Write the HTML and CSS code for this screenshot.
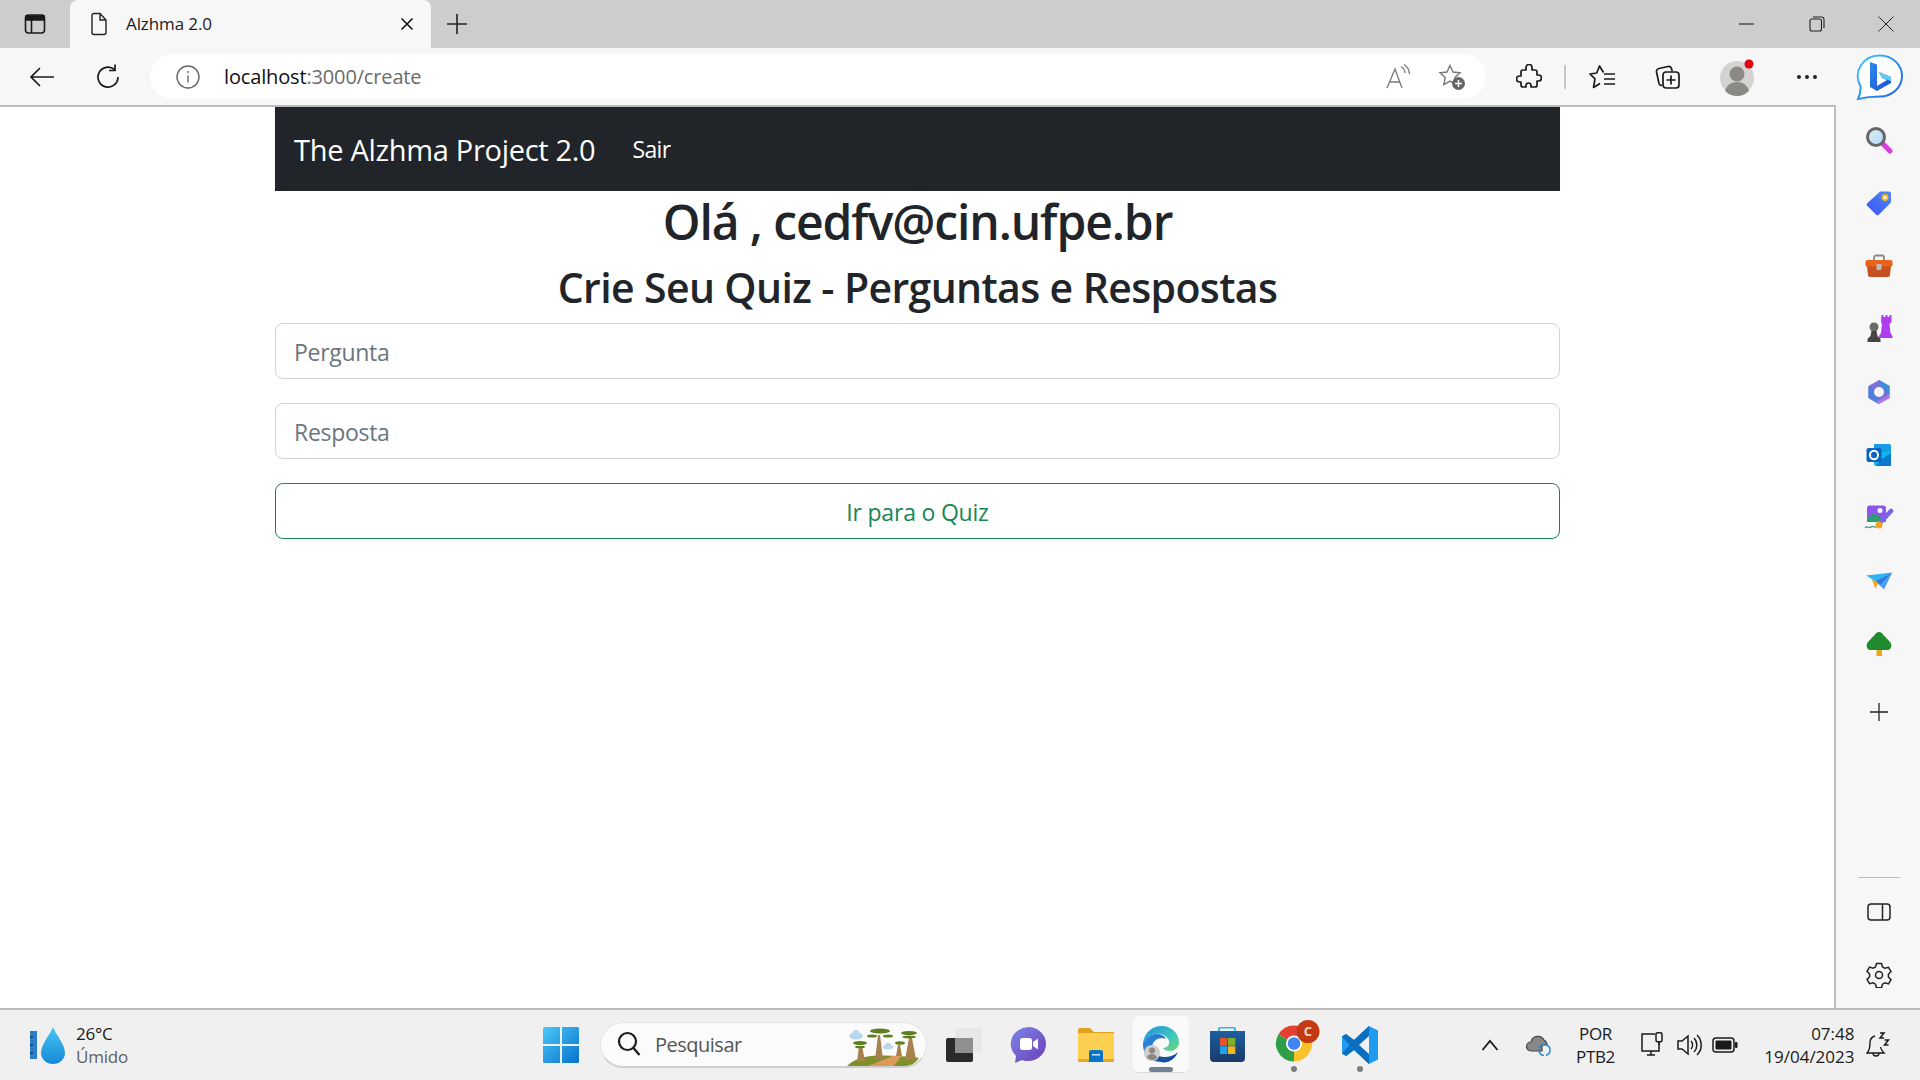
FILE: index.html
```html
<!DOCTYPE html>
<html lang="pt-BR">
<head>
    <meta charset="UTF-8">
    <title>Alzhma 2.0</title>
    <link rel="stylesheet" href="styles.css">
</head>
<body>
    <div class="tabstrip">
        <div class="strip-btn">
            <svg width="24" height="24" viewBox="0 0 24 24" fill="none" stroke="#1a1a1a" stroke-width="1.6"><rect x="2.5" y="3" width="19" height="18" rx="3"/><path d="M3 4h18v4H3z" fill="#1a1a1a"/><path d="M8.5 8v13"/></svg>
        </div>
        <div class="tab">
            <svg class="tab-doc" width="18" height="24" viewBox="0 0 18 24" fill="none" stroke="#222" stroke-width="1.4"><path d="M2 3.5a2 2 0 0 1 2-2h6l6 6.5v12.500a2 2 0 0 1-2 2H4a2 2 0 0 1-2-2z"/><path d="M10 1.500V8h6"/></svg>
            <span class="tab-title">Alzhma 2.0</span>
            <svg class="tab-close" width="14" height="14" viewBox="0 0 14 14" stroke="#111" stroke-width="1.6"><path d="M1.500 1.500l11 11M12.500 1.500l-11 11"/></svg>
        </div>
        <div class="new-tab">
            <svg width="22" height="22" viewBox="0 0 22 22" stroke="#222" stroke-width="1.6"><path d="M11 1v20M1 11h20"/></svg>
        </div>
        <div class="win-controls">
            <svg width="16" height="16" viewBox="0 0 16 16" stroke="#222" stroke-width="1.1"><path d="M0 8h15"/></svg>
            <svg width="16" height="16" viewBox="0 0 16 16" fill="none" stroke="#222" stroke-width="1.1"><rect x="1" y="3" width="11.500" height="12" rx="2"/><path d="M4 1h8.500A2.500 2.500 0 0 1 15 3.500V12"/></svg>
            <svg width="16" height="16" viewBox="0 0 16 16" stroke="#222" stroke-width="1"><path d="M0.500 0.500l15 15M15.500 0.500l-15 15"/></svg>
        </div>
    </div>

    <div class="toolbar">
        <div class="tool-btn">
            <svg width="26" height="22" viewBox="0 0 26 22" fill="none" stroke="#1a1a1a" stroke-width="1.7"><path d="M25 11H2M11 2l-9 9 9 9"/></svg>
        </div>
        <div class="tool-btn">
            <svg width="26" height="26" viewBox="0 0 26 26" fill="none" stroke="#1a1a1a" stroke-width="1.7"><path d="M19.500 5.500A10 10 0 1 0 23 13"/><path d="M20 0.500v6h-6"/></svg>
        </div>
        <div class="address">
            <svg class="addr-info" width="26" height="26" viewBox="0 0 26 26" fill="none" stroke="#666" stroke-width="1.4"><circle cx="13" cy="13" r="11"/><path d="M13 11.500v7M13 7v2"/></svg>
            <span class="url">localhost<span class="url-rest">:3000/create</span></span>
            <svg class="addr-read" width="26" height="26" viewBox="0 0 26 26" fill="none" stroke="#777" stroke-width="1.3"><path d="M2 24L10 5l7 19M5 18h10"/><path d="M16 2.500a8 8 0 0 1 4 6.500M19 0.500a12 12 0 0 1 5.500 9.500"/></svg>
            <svg class="addr-fav" width="28" height="28" viewBox="0 0 28 28"><path d="M12 2.500l3 6.500 7 .8-5.200 4.800 1.400 7-6.200-3.500-6.200 3.500 1.400-7L2 9.800 9 9z" fill="none" stroke="#777" stroke-width="1.4"/><circle cx="20.500" cy="20.500" r="6.500" fill="#666"/><path d="M20.500 17v7M17 20.500h7" stroke="#fff" stroke-width="1.500"/></svg>
        </div>
        <div class="tool-btn tool-ext">
            <svg width="26" height="26" viewBox="0 0 26 26" fill="none" stroke="#1a1a1a" stroke-width="1.7" stroke-linejoin="round"><path d="M10 3.500a3 3 0 0 1 6 0V6h3a2 2 0 0 1 2 2v3h1.500a3 3 0 0 1 0 6H21v4a2 2 0 0 1-2 2h-4v-1.500a2.500 2.500 0 0 0-5 0V23H7a2 2 0 0 1-2-2v-3H3.500a3 3 0 0 1 0-6H5V8a2 2 0 0 1 2-2h3z"/></svg>
        </div>
        <div class="tool-sep"></div>
        <div class="tool-btn tool-favs">
            <svg width="28" height="26" viewBox="0 0 28 26" fill="none" stroke="#1a1a1a" stroke-width="1.7" stroke-linejoin="round"><path d="M15.500 8.500L11.500 2 8.700 9 2 10l5 4.800L5.500 23.500l6.500-4"/><path d="M16 10h11M16 15h11M16 20h11"/></svg>
        </div>
        <div class="tool-btn tool-gap">
            <svg width="26" height="26" viewBox="0 0 26 26" fill="none" stroke="#1a1a1a" stroke-width="1.7"><path d="M7 21.500a3 3 0 0 1-3-2L1.500 8A3 3 0 0 1 4 4.500L13 2.500a3 3 0 0 1 3.500 2l.7 2.500"/><rect x="8" y="8" width="16" height="16" rx="3"/><path d="M16 11.500v9M11.500 16h9"/></svg>
        </div>
        <div class="tool-btn tool-profile">
            <svg width="36" height="38" viewBox="0 0 36 38"><circle cx="17" cy="20" r="17" fill="#d5d3d1"/><circle cx="17" cy="16" r="7.500" fill="#8b8986"/><path d="M5 33c2-7 7-9 12-9s10 2 12 9a17 17 0 0 1-24 0z" fill="#8b8986"/><circle cx="29" cy="6" r="4.500" fill="#e3000f"/></svg>
        </div>
        <div class="tool-btn tool-dots">
            <svg width="22" height="6" viewBox="0 0 22 6" fill="#222"><circle cx="3" cy="3" r="2"/><circle cx="11" cy="3" r="2"/><circle cx="19" cy="3" r="2"/></svg>
        </div>
        <div class="bing">
            <svg width="48" height="46" viewBox="0 0 48 46"><defs><linearGradient id="bg1" x1="0" y1="0" x2="1" y2="1"><stop offset="0" stop-color="#45c8f5"/><stop offset="1" stop-color="#1b5fe0"/></linearGradient><linearGradient id="bg2" x1="0" y1="0" x2="1" y2="1"><stop offset="0" stop-color="#2f8bf0"/><stop offset="1" stop-color="#1c4fd0"/></linearGradient></defs><path d="M24 1.500A22 20.500 0 0 1 24 42.500C17 42.500 10 43 2 45 4 41 5 37 4.500 32A22 20.500 0 0 1 24 1.500z" fill="#fff" stroke="url(#bg1)" stroke-width="2"/><path d="M14 8L21 10.500V32L31 26 26 24 23 18 35 23V29L21 37 14 33z" fill="url(#bg2)"/><path d="M23 18l12 5v4l-9-3z" fill="#5cd0f0"/></svg>
        </div>
    </div>

    <div class="main">
        <div class="page">
            <div class="container">
                <nav class="navbar">
                    <span class="brand">The Alzhma Project 2.0</span>
                    <a class="nav-link">Sair</a>
                </nav>
                <h1 class="hello">Olá , cedfv@cin.ufpe.br</h1>
                <h2 class="subtitle">Crie Seu Quiz - Perguntas e Respostas</h2>
                <input class="field" type="text" placeholder="Pergunta">
                <input class="field" type="text" placeholder="Resposta">
                <button class="btn-quiz">Ir para o Quiz</button>
            </div>
        </div>
        <aside class="sidebar">
            <div class="side-icon side-first">
                <svg width="28" height="28" viewBox="0 0 28 28"><defs><linearGradient id="lens" x1="0" y1="0" x2="1" y2="1"><stop offset="0" stop-color="#e3f2fb"/><stop offset="1" stop-color="#a9d6f2"/></linearGradient></defs><path d="M17 17l8 8" stroke="#d63fe0" stroke-width="5" stroke-linecap="round"/><circle cx="11" cy="11" r="8.500" fill="url(#lens)" stroke="#666" stroke-width="3"/></svg>
            </div>
            <div class="side-icon">
                <svg width="26" height="26" viewBox="0 0 26 26"><defs><linearGradient id="tag" x1="1" y1="0" x2="0" y2="1"><stop offset="0" stop-color="#4f8dfb"/><stop offset="1" stop-color="#3d4ff0"/></linearGradient></defs><path d="M15 1.500h8a2 2 0 0 1 2 2v8a3 3 0 0 1-1 2L13 24.500a2 2 0 0 1-3 0L1.500 16a2 2 0 0 1 0-3L13 2.500a3 3 0 0 1 2-1z" fill="url(#tag)"/><circle cx="19" cy="7.500" r="2.500" fill="#fff" stroke="#f5b81c" stroke-width="1.800"/></svg>
            </div>
            <div class="side-icon">
                <svg width="28" height="24" viewBox="0 0 28 24"><path d="M9 7V3.500A2 2 0 0 1 11 1.500h6a2 2 0 0 1 2 2V7" fill="none" stroke="#888" stroke-width="1.800"/><path d="M2 12h24l-1 9a2 2 0 0 1-2 2H5a2 2 0 0 1-2-2z" fill="#c84f1f"/><path d="M0.500 8a2 2 0 0 1 2-2h23a2 2 0 0 1 2 2v3.500a1 1 0 0 1-1 1H1.500a1 1 0 0 1-1-1z" fill="#e8641c"/><rect x="11.500" y="10" width="5" height="6" rx="1" fill="#bdbdbd"/></svg>
            </div>
            <div class="side-icon">
                <svg width="28" height="28" viewBox="0 0 28 28"><path d="M17.500 1h2v2h2V1h2v2h2V1h2v7l-2 2 1 9 2 3v2H15v-2l2-3 1-9-1-2z" fill="#b03cf0" transform="translate(-1 -1)"/><circle cx="9" cy="12" r="4.500" fill="#6a6a6a"/><path d="M6.500 16h5l1 5 3 3v3H2.500v-3l3-3z" fill="#444"/></svg>
            </div>
            <div class="side-icon">
                <svg width="26" height="26" viewBox="0 0 26 26"><path d="M13 1l10.500 6v12L13 25 2.500 19V7z" fill="#7f6fd8"/><path d="M13 1l10.500 6v8L18 12V9l-5-3z" fill="#3b8fd8"/><path d="M2.500 19V7l5 3 0 6 5 3 0 6z" fill="#4d7fe0"/><path d="M23.500 15v4L13 25l-3-2 8-4z" fill="#b07ae0"/><circle cx="13" cy="13" r="5" fill="#f7f7f7"/></svg>
            </div>
            <div class="side-icon">
                <svg width="26" height="24" viewBox="0 0 26 24"><path d="M8 1h15a2 2 0 0 1 2 2v6H8z" fill="#1a9be8"/><path d="M8 9h17v13a1 1 0 0 1-1 1H10a2 2 0 0 1-2-2z" fill="#12b5e8"/><path d="M16 16l9-6v13H10z" fill="#0a78d0"/><rect x="0.500" y="5" width="15" height="14" rx="2" fill="#0a64c0"/><ellipse cx="8" cy="12" rx="4" ry="4.200" fill="none" stroke="#fff" stroke-width="2"/></svg>
            </div>
            <div class="side-icon">
                <svg width="30" height="26" viewBox="0 0 30 26"><path d="M3 3a2.500 2.500 0 0 1 2.500-2.500h14A2.500 2.500 0 0 1 22 3v14H3z" fill="#8f56ee"/><circle cx="16" cy="5.500" r="2.500" fill="#fff"/><path d="M3 14c3-5 7-6 10-4 3 2 5 3 9 3v4H3z" fill="#2e9d77"/><path d="M27 6L15 19" stroke="#7a64e8" stroke-width="4.500" stroke-linecap="round"/><circle cx="15" cy="20" r="3.500" fill="#f3a51f"/><path d="M1 23c2-3 4 1 6-1s3 1 5 0" fill="none" stroke="#2e9d77" stroke-width="1.200"/></svg>
            </div>
            <div class="side-icon">
                <svg width="26" height="18" viewBox="0 0 26 18"><path d="M0 3.500L26 .5 9 9z" fill="#2fb6f3"/><path d="M26 .5L9 9l9 8z" fill="#2d7fe8"/><path d="M26 .5L18 17l-4-4z" fill="#4a9ff0"/><path d="M5.500 6.500L9.500 17l2.500-6-3-2z" fill="#f5a81c"/></svg>
            </div>
            <div class="side-icon">
                <svg width="26" height="24" viewBox="0 0 26 24"><rect x="10.500" y="17" width="5.500" height="7" fill="#f0a51c"/><path d="M13 0c2 0 3 1 4.500 3l6.500 7c2 2.500 2 7-2 8H4c-4-1-4-5.500-2-8l6.500-7C10 1 11 0 13 0z" fill="#1f8a2e"/></svg>
            </div>
            <div class="side-icon side-plus">
                <svg width="20" height="20" viewBox="0 0 20 20" stroke="#222" stroke-width="1.300"><path d="M10 1v18M1 10h18"/></svg>
            </div>
            <div class="side-line"></div>
            <div class="side-icon side-panel">
                <svg width="24" height="20" viewBox="0 0 24 20" fill="none" stroke="#222" stroke-width="1.500"><rect x="1" y="2" width="22" height="16" rx="3"/><path d="M15.500 2v16"/></svg>
            </div>
            <div class="side-icon">
                <svg width="26" height="26" viewBox="0 0 26 26" fill="none" stroke="#222" stroke-width="1.500"><circle cx="13" cy="13" r="3.500"/><path d="M10.500 1.500h5l1 3.500 2.500 1.300 3.500-1 2.500 4.300-2.600 2.600v2.800l2.600 2.600-2.500 4.300-3.500-1-2.500 1.300-1 3.500h-5l-1-3.500L7 20.700l-3.500 1L1 17.400l2.600-2.600V12L1 9.400l2.500-4.300 3.500 1L9.500 5z"/></svg>
            </div>
        </aside>
    </div>

    <footer class="taskbar">
        <div class="weather">
            <svg width="36" height="38" viewBox="0 0 36 38"><defs><linearGradient id="drop" x1="0" y1="0" x2="0" y2="1"><stop offset="0" stop-color="#47c5f4"/><stop offset="1" stop-color="#1789d8"/></linearGradient></defs><rect x="0" y="5" width="7" height="28" fill="#2a7fc8"/><path d="M0 11h3M0 19h3M0 27h3" stroke="#123" stroke-width="1"/><path d="M23 1c3 8 12 17 12 26a12 11 0 0 1-24 0c0-9 9-18 12-26z" fill="url(#drop)"/></svg>
            <div class="weather-text">
                <span class="temp">26°C</span>
                <span class="humid">Úmido</span>
            </div>
        </div>
        <svg class="start" width="36" height="36" viewBox="0 0 36 36"><defs><linearGradient id="win" x1="0" y1="0" x2="1" y2="1"><stop offset="0" stop-color="#4cc8f8"/><stop offset="1" stop-color="#0672cc"/></linearGradient></defs><path d="M0 1.500A1.500 1.500 0 0 1 1.500 0H17v17H0zM19 0h15.500A1.500 1.500 0 0 1 36 1.500V17H19zM0 19h17v17H1.500A1.500 1.500 0 0 1 0 34.500zM19 19h17v15.500a1.500 1.500 0 0 1-1.500 1.500H19z" fill="url(#win)"/></svg>
        <div class="search">
            <svg width="24" height="26" viewBox="0 0 24 26" fill="none" stroke="#1a1a1a" stroke-width="2.200"><circle cx="10.500" cy="10.500" r="8.500"/><path d="M16.500 17l6 7"/></svg>
            <span class="search-text">Pesquisar</span>
            <svg class="search-art" width="80" height="39" viewBox="0 0 80 39">
                <path d="M2 39c6-6 14-9 24-10 16-1 34 0 48 2-3 4-7 8-13 8z" fill="#7f8f2a"/>
                <path d="M23 39c8-3 17-7 24-10h9c-2 4-5 8-8 10z" fill="#d99a5b"/>
                <g fill="#a8814f">
                    <path d="M30 33l3-25h2l3 24z"/>
                    <path d="M60 33l4-22h3l4 21z"/>
                    <path d="M12 35l2-16h3l3 15z"/>
                    <path d="M51 29l2-11h2l2 11z"/>
                </g>
                <g fill="#5f7f1f">
                    <ellipse cx="35" cy="4" rx="10" ry="2.500"/>
                    <ellipse cx="27" cy="9" rx="5" ry="1.500"/>
                    <ellipse cx="43" cy="9" rx="5" ry="1.500"/>
                    <ellipse cx="64" cy="6" rx="8" ry="2"/>
                    <ellipse cx="64" cy="10" rx="7" ry="1.500"/>
                    <ellipse cx="15" cy="16" rx="7" ry="2"/>
                    <ellipse cx="15" cy="20" rx="5" ry="1.300"/>
                    <ellipse cx="55" cy="16" rx="5" ry="1.800"/>
                </g>
                <g fill="#b8d6ec">
                    <ellipse cx="11" cy="9" rx="7" ry="3.500"/>
                    <circle cx="11" cy="6.500" r="3.500"/>
                    <ellipse cx="43" cy="20" rx="5" ry="2.500"/>
                    <circle cx="43" cy="18" r="2.500"/>
                </g>
            </svg>
        </div>
        <div class="task-icons">
            <div class="task-slot">
                <svg class="task-view" width="36" height="34" viewBox="0 0 36 34"><rect x="0" y="10" width="27" height="24" rx="2" fill="#2a2a2a"/><rect x="9" y="0" width="27" height="25" rx="2" fill="#e6e6e6" opacity=".9"/><rect x="9" y="10" width="18" height="15" fill="#8f8f8f"/></svg>
            </div>
            <div class="task-slot">
                <svg width="36" height="36" viewBox="0 0 36 36"><defs><linearGradient id="chat" x1="0" y1="0" x2="1" y2="1"><stop offset="0" stop-color="#7d86e8"/><stop offset="1" stop-color="#6a3fb8"/></linearGradient></defs><path d="M18 0a18 17 0 0 1 0 34c-2 0-4 0-6-1l-7 3 1-7A18 17 0 0 1 18 0z" fill="url(#chat)"/><rect x="10" y="11" width="12" height="12" rx="2.500" fill="#fff"/><path d="M23 15l5-3.500v11L23 19z" fill="#fff"/></svg>
            </div>
            <div class="task-slot">
                <svg class="task-folder" width="36" height="34" viewBox="0 0 36 34"><path d="M0 2a2 2 0 0 1 2-2h10l4 4h20v6H0z" fill="#e0a020"/><rect x="0" y="5" width="36" height="29" rx="1" fill="#fdd052"/><path d="M0 31h36v2a1 1 0 0 1-1 1H1a1 1 0 0 1-1-1z" fill="#e8a820"/><path d="M11 24a2 2 0 0 1 2-2h10a2 2 0 0 1 2 2v10H11z" fill="#0a74c8"/><rect x="14" y="26" width="8" height="1.500" fill="#cfe8f8"/></svg>
            </div>
            <div class="task-slot task-active">
                <svg width="36" height="37" viewBox="0 0 36 37"><defs><linearGradient id="edge1" x1="0" y1="0" x2="1" y2="1"><stop offset="0" stop-color="#1f8fd8"/><stop offset=".6" stop-color="#3cc8c0"/><stop offset="1" stop-color="#6fd86a"/></linearGradient><linearGradient id="edge2" x1="0" y1="0" x2="1" y2="1"><stop offset="0" stop-color="#2f8ee0"/><stop offset="1" stop-color="#1a5fb8"/></linearGradient></defs><path d="M0 17C1 7 9 0 19 0 29 0 36 8 36 16 36 22 31 25 27 25 24 25 21 24 20 22 24 22 27 19 26 15 24 9 17 7 12 8 6 9 2 12 0 17z" fill="url(#edge1)"/><path d="M0 17C3 10 9 8 14 8 18 8 22 10 23 13 17 10 9 14 9 22 9 29 14 34 20 36 9 37-1 29 0 17z" fill="url(#edge2)"/><path d="M9 22C10 27 15 31 21 31 26 31 31 30 35 26 33 32 26 37 20 36.500 14 35 9 29 9 22z" fill="#174f9e"/><circle cx="9" cy="27" r="8" fill="#cfcdc9"/><circle cx="9" cy="24.500" r="3" fill="#8a8885"/><path d="M4 32c.5-3 2.500-4 5-4s4.500 1 5 4a8 8 0 0 1-10 0z" fill="#8a8885"/></svg>
                <span class="task-pill"></span>
            </div>
            <div class="task-slot">
                <svg width="35" height="35" viewBox="0 0 35 35"><defs><linearGradient id="bag" x1="0" y1="0" x2="0" y2="1"><stop offset="0" stop-color="#1d5f9f"/><stop offset="1" stop-color="#183a68"/></linearGradient></defs><path d="M9 5V2a1.500 1.500 0 0 1 1.500-1.500h13A1.500 1.500 0 0 1 25 2v3" fill="none" stroke="#2eb4ee" stroke-width="1.800"/><path d="M0 4h35v27a4 4 0 0 1-4 4H4a4 4 0 0 1-4-4z" fill="url(#bag)"/><rect x="10" y="11" width="7.300" height="7.700" fill="#e8532b"/><rect x="18" y="11" width="7.300" height="7.700" fill="#7cb02c"/><rect x="10" y="19.300" width="7.300" height="7.700" fill="#22a0e8"/><rect x="18" y="19.300" width="7.300" height="7.700" fill="#f5b81c"/></svg>
            </div>
            <div class="task-slot">
                <svg width="46" height="46" viewBox="0 0 46 46" overflow="visible"><path d="M23 21.500L38.600 12.500A18 18 0 0 0 7.400 12.500z" fill="#e34133"/><path d="M23 21.500L7.400 12.500A18 18 0 0 0 23 39.500z" fill="#2f9e48"/><path d="M23 21.500V39.500A18 18 0 0 0 38.600 12.500z" fill="#f8c32a"/><circle cx="23" cy="21.500" r="8" fill="#fff"/><circle cx="23" cy="21.500" r="6.300" fill="#4285f0"/><circle cx="37" cy="9.500" r="11.500" fill="#c33a12"/><text class="chrome-badge" x="37" y="14" text-anchor="middle">C</text></svg>
                <span class="task-dot"></span>
            </div>
            <div class="task-slot">
                <svg width="38" height="38" viewBox="0 0 38 38"><path d="M28 0l9 4.500v29L28 38 13 24 5 30l-4-2.500V10.500L5 8l8 6z" fill="#1f9cf0"/><path d="M28 0v38L13 24l-8 6-4-2.500 7.500-8.500L1 10.500 5 8l8 6z" fill="#0a6fc0"/><path d="M28 10L18 19l10 9z" fill="#f2f2f2"/></svg>
                <span class="task-dot"></span>
            </div>
        </div>
        <div class="tray">
            <svg class="tray-chev" width="18" height="12" viewBox="0 0 18 12" fill="none" stroke="#1a1a1a" stroke-width="1.800"><path d="M1.500 11L9 2l7.500 9"/></svg>
            <svg class="tray-cloud" width="26" height="26" viewBox="0 0 26 26"><path d="M5 19a4.500 4.500 0 0 1 0-9 7 7 0 0 1 13-2 6 6 0 0 1 3 5H16v6z" fill="#888" stroke="#444" stroke-width="1.200"/><circle cx="18.500" cy="18" r="5.500" fill="none" stroke="#1f8ae0" stroke-width="1.500" stroke-dasharray="7 2"/></svg>
            <div class="tray-lang"><span>POR</span><span>PTB2</span></div>
            <svg class="tray-net" width="24" height="26" viewBox="0 0 24 26" fill="none" stroke="#1a1a1a" stroke-width="1.500"><path d="M15 2H2v17h17v-9"/><path d="M7 23h8M11 19v4"/><rect x="16" y="0.800" width="6" height="9" rx="1.500"/><path d="M19 10v3"/></svg>
            <svg class="tray-sound" width="26" height="24" viewBox="0 0 26 24" fill="none" stroke="#1a1a1a" stroke-width="1.500"><path d="M2 8h4l6-5v18l-6-5H2z"/><path d="M15 8a6 6 0 0 1 0 8M18 5a10 10 0 0 1 0 14M21 2a14 14 0 0 1 0 20"/></svg>
            <svg class="tray-batt" width="26" height="16" viewBox="0 0 26 16"><rect x="1" y="1" width="21" height="14" rx="3" fill="none" stroke="#1a1a1a" stroke-width="1.500"/><rect x="3.500" y="3.500" width="16" height="9" rx="1" fill="#1a1a1a"/><rect x="23" y="5" width="2.500" height="6" rx="1" fill="#1a1a1a"/></svg>
            <div class="tray-clock"><span>07:48</span><span>19/04/2023</span></div>
            <svg class="tray-bell" width="24" height="28" viewBox="0 0 24 28" fill="none" stroke="#1a1a1a" stroke-width="1.400"><path d="M9 5a7 7 0 0 0-5 7c0 6-1 8-3 10h17c-2-2-3-3-3.500-6"/><path d="M7 22a3 3 0 0 0 6 0"/><path d="M14 2h4l-4 5h4M18.500 9h4l-4 5h4" stroke-width="1.500"/></svg>
        </div>
    </footer>
</body>
</html>
```

FILE: styles.css
```css
* {
    box-sizing: border-box;
}
html, body {
    height: 100%;
}
body {
    margin: 0;
    height: 1080px;
    overflow: hidden;
    display: flex;
    flex-direction: column;
    font-family: "Open Sans", "Noto Sans", Arial, sans-serif;
    color: #212529;
    background: #fff;
}
svg {
    display: block;
    flex: none;
}

/* barra de abas */
.tabstrip {
    height: 48px;
    flex: none;
    display: flex;
    background: #cdcdcd;
}
.strip-btn {
    width: 70px;
    display: flex;
    align-items: center;
    justify-content: center;
}
.tab {
    width: 361px;
    background: #f7f7f7;
    border-radius: 8px 8px 0 0;
    display: flex;
    align-items: center;
    padding: 0 17px 0 20px;
}
.tab-title {
    margin-left: 18px;
    padding-bottom: 2px;
    font-size: 17px;
    letter-spacing: -0.1px;
    color: #1a1a1a;
    flex: 1;
}
.new-tab {
    width: 52px;
    display: flex;
    align-items: center;
    justify-content: center;
}
.win-controls {
    margin-left: auto;
    width: 181px;
    padding-right: 26px;
    display: flex;
    align-items: center;
    justify-content: space-between;
}

/* barra de endereco */
.toolbar {
    height: 57px;
    flex: none;
    display: flex;
    align-items: center;
    background: #f7f7f7;
    padding-left: 22px;
}
.tool-btn {
    width: 40px;
    height: 40px;
    flex: none;
    display: flex;
    align-items: center;
    justify-content: center;
}
.tool-btn + .tool-btn {
    margin-left: 26px;
}
.address {
    margin-left: 22px;
    width: 1336px;
    height: 45px;
    flex: none;
    border-radius: 23px;
    background: #fff;
    display: flex;
    align-items: center;
    padding-left: 25px;
}
.url {
    margin-left: 23px;
    font-size: 20px;
    letter-spacing: -0.15px;
    color: #111;
    flex: 1;
}
.url-rest {
    color: #6b6b6b;
}
.addr-read {
    margin-right: 27px;
}
.addr-fav {
    margin-right: 20px;
}
.tool-ext {
    margin-left: 23px;
}
.tool-sep {
    width: 2px;
    height: 24px;
    margin-left: 15px;
    background: #c8c8c8;
}
.tool-btn.tool-favs {
    margin-left: 16px;
}
.tool-btn.tool-profile {
    margin-left: 30px;
}
.tool-btn.tool-dots {
    margin-left: 29px;
}
.bing {
    margin-left: 29px;
    flex: none;
}

/* conteudo */
.main {
    flex: 1;
    display: flex;
    min-height: 0;
}
.page {
    width: 1836px;
    flex: none;
    border-top: 2px solid #bdbdbd;
    border-right: 2px solid #bdbdbd;
    border-bottom: 2px solid #bdbdbd;
    padding-left: 275px;
}
.container {
    width: 1285px;
}
.navbar {
    height: 84px;
    background: #212529;
    display: flex;
    align-items: center;
    padding-left: 19px;
    color: #fff;
}
.brand {
    font-size: 29px;
    letter-spacing: -0.3px;
}
.nav-link {
    margin-left: 37px;
    font-size: 23px;
    letter-spacing: -0.6px;
}
.hello {
    margin: 2px 0 0;
    font-size: 48px;
    line-height: 58px;
    font-weight: 600;
    letter-spacing: -1.08px;
    text-align: center;
}
.subtitle {
    margin: 11px 0 0;
    font-size: 41px;
    line-height: 50px;
    font-weight: 600;
    letter-spacing: -0.62px;
    text-align: center;
}
.field {
    display: block;
    width: 100%;
    height: 56px;
    margin-top: 24px;
    padding: 2px 18px 0;
    border: 1.5px solid #ced4da;
    border-radius: 8px;
    background: #fff;
    font: inherit;
    font-size: 23px;
    letter-spacing: -0.3px;
    outline: none;
}
.subtitle + .field {
    margin-top: 11px;
}
.field::placeholder {
    color: #6c757d;
    opacity: 1;
}
.btn-quiz {
    display: block;
    width: 100%;
    height: 56px;
    margin-top: 24px;
    padding-top: 3px;
    border: 1.5px solid #198754;
    border-radius: 8px;
    background: #fff;
    color: #198754;
    font: inherit;
    font-size: 23px;
    letter-spacing: -0.2px;
}

/* barra lateral */
.sidebar {
    flex: 1;
    background: #f7f7f7;
    border-bottom: 2px solid #bdbdbd;
    display: flex;
    flex-direction: column;
    align-items: center;
    padding-left: 2px;
}
.side-icon {
    height: 32px;
    flex: none;
    margin-bottom: 31px;
    display: flex;
    align-items: center;
    justify-content: center;
}
.side-first {
    margin-top: 19px;
}
.side-plus {
    margin-top: 5px;
    margin-bottom: 0;
}
.side-line {
    width: 42px;
    height: 1px;
    flex: none;
    margin-top: 149px;
    background: #bdbdbd;
}
.side-panel {
    margin-top: 18px;
}

/* barra de tarefas */
.taskbar {
    height: 70px;
    flex: none;
    display: flex;
    align-items: center;
    padding-bottom: 1px;
    background: #f0f0f0;
}
.weather {
    width: 543px;
    flex: none;
    padding-left: 30px;
    display: flex;
    align-items: center;
}
.weather-text {
    margin-left: 10px;
    display: flex;
    flex-direction: column;
    font-size: 17px;
    line-height: 23px;
    letter-spacing: -0.2px;
}
.temp {
    color: #1a1a1a;
}
.humid {
    color: #5f5f5f;
}
.start {
    margin-right: 21px;
}
.search {
    width: 327px;
    height: 46px;
    flex: none;
    border-radius: 23px;
    border: 1px solid #e3e3e3;
    border-bottom: 2px solid #cfcfcf;
    background: #fbfbfb;
    display: flex;
    align-items: center;
    padding-left: 16px;
    overflow: hidden;
}
.search-text {
    margin-left: 14px;
    font-size: 20px;
    letter-spacing: -0.5px;
    color: #555;
    flex: 1;
}
.search-art {
    align-self: flex-end;
    margin-right: 1px;
}
.task-icons {
    margin-left: 1px;
    flex: none;
    display: flex;
    align-self: stretch;
}
.task-slot {
    width: 66.5px;
    display: flex;
    align-items: center;
    justify-content: center;
    position: relative;
}
.task-view {
    margin-left: 6px;
}
.task-folder {
    margin-left: 4px;
}
.task-active::before {
    content: "";
    position: absolute;
    left: 5px;
    right: 5px;
    top: 6px;
    bottom: 6px;
    border-radius: 5px;
    background: #fafafa;
    border-bottom: 1px solid #dcdcdc;
}
.task-active svg {
    position: relative;
}
.task-pill {
    position: absolute;
    left: 21px;
    bottom: 7px;
    width: 24px;
    height: 5px;
    border-radius: 3px;
    background: #6e8294;
}
.task-dot {
    position: absolute;
    left: 30px;
    bottom: 7px;
    width: 6px;
    height: 6px;
    border-radius: 50%;
    background: #7d7d7d;
}
.chrome-badge {
    font-family: "Open Sans", sans-serif;
    font-size: 13px;
    font-weight: 700;
    fill: #f3d9cc;
}
.tray {
    margin-left: 87px;
    flex: none;
    display: flex;
    align-items: center;
    color: #1a1a1a;
}
.tray-cloud {
    margin-left: 27px;
}
.tray-lang {
    margin-left: 18px;
    width: 52px;
    display: flex;
    flex-direction: column;
    align-items: center;
    font-size: 17px;
    line-height: 23px;
    letter-spacing: -0.3px;
}
.tray-net {
    margin-left: 18px;
}
.tray-sound {
    margin-left: 12px;
}
.tray-batt {
    margin-left: 10px;
}
.tray-clock {
    width: 117px;
    display: flex;
    flex-direction: column;
    align-items: flex-end;
    font-size: 17px;
    line-height: 23px;
}
.tray-bell {
    margin-left: 11px;
}
```
